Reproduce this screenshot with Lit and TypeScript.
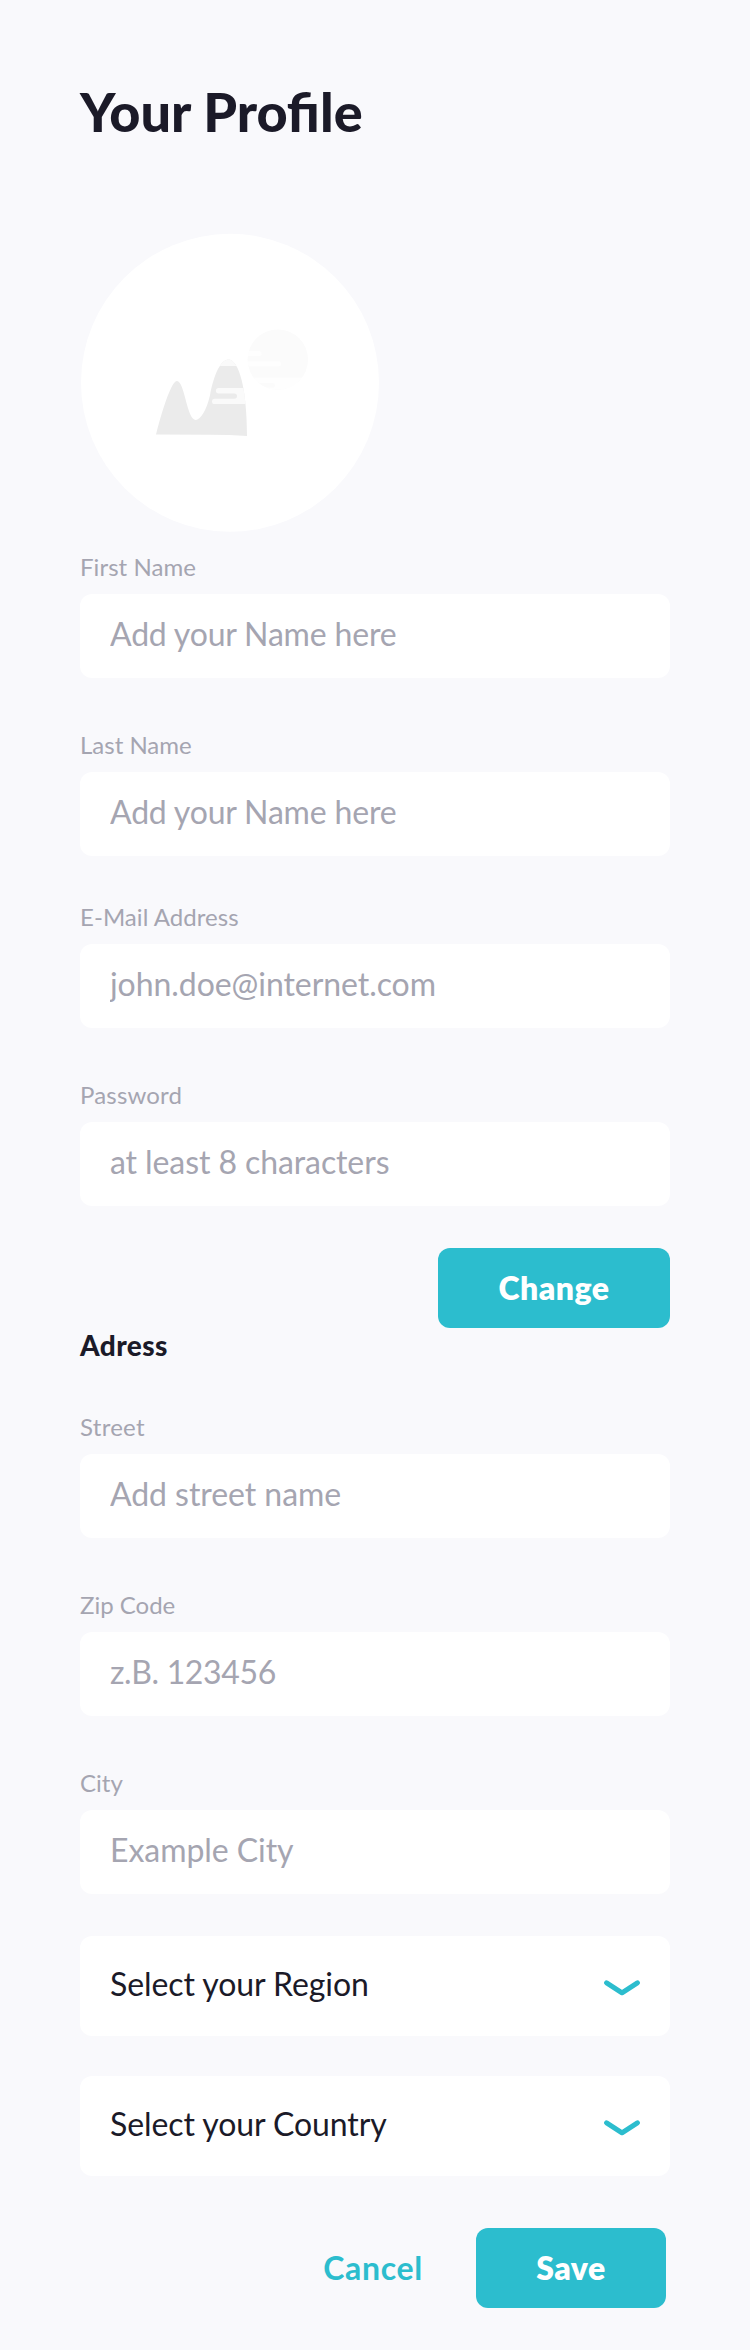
import { LitElement, html, css, svg } from "lit";
import { customElement, property } from "lit/decorators.js";
import { styleMap } from "lit/directives/style-map.js";

const tracking = (px: number) => styleMap({ letterSpacing: `${px}px` });

@customElement("form-field")
class FormField extends LitElement {
  @property() label = "";
  @property() placeholder = "";
  @property() type = "text";
  @property({ type: Number }) labelTracking = 0;
  @property({ type: Number }) textTracking = 0;
  static styles = css`
    :host { display: block; }
    .label { display: block; font: 400 24px/29px Lato, sans-serif; color: #a5a5b1; margin-bottom: 13px; }
    .input {
      display: block; box-sizing: border-box; width: 100%; height: 84px; margin: 0;
      padding: 20px 30px 25px; border: 0; border-radius: 12px; background: #fff; outline: none;
      font: 400 32px/39px Lato, sans-serif; color: #1b1a28;
    }
    .input::placeholder { color: #a5a5b1; opacity: 1; }
  `;
  render() {
    return html`<label>
      <span class="label" style=${tracking(this.labelTracking)}>${this.label}</span>
      <input class="input" style=${tracking(this.textTracking)} type=${this.type} placeholder=${this.placeholder} />
    </label>`;
  }
}

@customElement("select-field")
class SelectField extends LitElement {
  @property() label = "";
  static styles = css`
    :host { display: block; }
    .select {
      display: flex; justify-content: space-between; align-items: center; box-sizing: border-box;
      width: 100%; height: 100px; padding: 0 30px; border: 0; border-radius: 12px; background: #fff;
      font: 400 32px/39px Lato, sans-serif; letter-spacing: -0.08px; color: #1b1a28;
    }
    .text { padding-bottom: 5px; }
    .chevron { display: block; margin-top: 3px; }
  `;
  render() {
    return html`<button class="select" type="button">
      <span class="text">${this.label}</span>
      <svg class="chevron" width="36" height="16" viewBox="0 0 36 16">
        <path d="M2.6 2.8 L18 12.8 L33.4 2.8" fill="none" stroke="#2cbdce" stroke-width="5" stroke-linecap="round" stroke-linejoin="round" />
      </svg>
    </button>`;
  }
}

const picture = svg`
  <defs>
    <clipPath id="peaks"><path d="M76 201.6 C84 171 92 148 97 148 C104.5 148 107 187 115.8 187 C120 187 126.5 178 130 162.3 C134 141 141 126.6 148.3 126.6 C159 126.6 167 156 167 203 Q150 201.8 130 201.8 Z" /></clipPath>
    <clipPath id="sun"><circle cx="197.8" cy="126.6" r="30.2" /></clipPath>
  </defs>
  <circle cx="150" cy="149.8" r="149" fill="#fff" />
  <g clip-path="url(#peaks)">
    <rect x="70" y="120" width="100" height="90" fill="#ebebeb" />
    <rect x="70" y="120" width="100" height="13" fill="#fafafa" />
    <path d="M138.6 155 H170 V171 H134.6 A2.6 2.6 0 0 1 134.6 165.8 H154.3 A2.7 2.7 0 0 0 154.3 160.4 H138.6 A2.7 2.7 0 0 1 138.6 155 Z" fill="#fafafa" />
  </g>
  <g clip-path="url(#sun)">
    <rect x="165" y="90" width="70" height="70" fill="#fbfbfb" />
    <path d="M165 117.9 H179 A2.6 2.6 0 0 1 179 123.1 H165 Z M165 128.2 H198.5 A2.5 2.5 0 0 1 198.5 133.2 H165 Z M165 144.8 H235 V160 H165 V154.8 H192.6 A2.4 2.4 0 0 0 192.6 150 H165 Z" fill="#fefefe" />
  </g>
`;

@customElement("app-root")
class AppRoot extends LitElement {
  static styles = css`
    :host {
      display: flex; flex-direction: column; box-sizing: border-box; width: 100%; min-height: 2350px;
      padding: 79px 80px 42px; background: #f9f9fc; font-family: Lato, sans-serif; color: #1b1a28;
    }
    .title { margin: 0; font-size: 54px; line-height: 65px; font-weight: 900; }
    .avatar { display: block; margin: 89px 0 19px; }
    .group { display: flex; flex-direction: column; gap: 52px; }
    .group + .group { margin-top: 46px; }
    .button {
      box-sizing: border-box; border: 0; border-radius: 12px; background: #2cbdce; color: #fff; height: 80px;
      padding: 20px 0 21px; font: 800 32px/39px Lato, sans-serif; letter-spacing: 0.5px; text-align: center;
    }
    .link {
      border: 0; background: none; color: #2cbdce; padding: 20px 0 21px;
      font: 700 32px/39px Lato, sans-serif; letter-spacing: 0.7px;
    }
    .change { align-self: flex-end; width: 232px; margin-top: 42px; }
    .subtitle { margin: 0 0 50px; font-size: 28px; line-height: 34px; font-weight: 900; letter-spacing: 0.4px; }
    .selects { display: flex; flex-direction: column; gap: 40px; margin-top: 42px; }
    .actions { display: flex; justify-content: flex-end; align-items: center; gap: 53px; margin: 52px 4px 0 0; }
    .save { width: 190px; }
  `;
  render() {
    return html`
      <h1 class="title">Your Profile</h1>
      <svg class="avatar" width="300" height="300" viewBox="0 0 300 300">${picture}</svg>
      <div class="group">
        <form-field label="First Name" placeholder="Add your Name here" .labelTracking=${0.06} .textTracking=${-0.18}></form-field>
        <form-field label="Last Name" placeholder="Add your Name here" .textTracking=${-0.18}></form-field>
      </div>
      <div class="group">
        <form-field label="E-Mail Address" placeholder="john.doe@internet.com" .labelTracking=${0.05} .textTracking=${-0.06}></form-field>
        <form-field label="Password" type="password" placeholder="at least 8 characters" .labelTracking=${0.18} .textTracking=${-0.09}></form-field>
      </div>
      <button class="button change" type="button">Change</button>
      <h2 class="subtitle">Adress</h2>
      <div class="group">
        <form-field label="Street" placeholder="Add street name" .labelTracking=${0.28} .textTracking=${-0.06}></form-field>
        <form-field label="Zip Code" placeholder="z.B. 123456" .textTracking=${-0.36}></form-field>
        <form-field label="City" placeholder="Example City" .textTracking=${-0.06}></form-field>
      </div>
      <div class="selects">
        <select-field label="Select your Region"></select-field>
        <select-field label="Select your Country"></select-field>
      </div>
      <div class="actions">
        <button class="link" type="button">Cancel</button>
        <button class="button save" type="button">Save</button>
      </div>
    `;
  }
}
